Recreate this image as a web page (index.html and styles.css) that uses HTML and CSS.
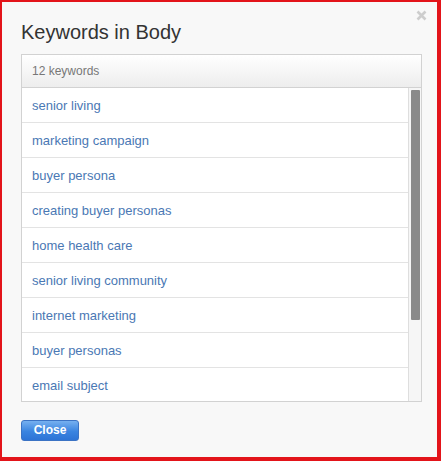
FILE: index.html
```html
<!DOCTYPE html>
<html>
<head>
<meta charset="utf-8">
<link rel="stylesheet" href="styles.css">
</head>
<body>
<div class="dialog">
  <svg class="close-x" width="11" height="11" viewBox="0 0 11 11"><path d="M1.5 1.5 L9.5 9.5 M9.5 1.5 L1.5 9.5" stroke="#cdcdcd" stroke-width="2.6" stroke-linecap="butt"/></svg>
  <h2 class="title">Keywords in Body</h2>
  <div class="box">
    <div class="box-head">12 keywords</div>
    <div class="list-wrap">
      <ul class="list">
        <li><a>senior living</a></li>
        <li><a>marketing campaign</a></li>
        <li><a>buyer persona</a></li>
        <li><a>creating buyer personas</a></li>
        <li><a>home health care</a></li>
        <li><a>senior living community</a></li>
        <li><a>internet marketing</a></li>
        <li><a>buyer personas</a></li>
        <li><a>email subject</a></li>
      </ul>
      <div class="scrollbar"><div class="thumb"></div></div>
    </div>
  </div>
  <div class="actions">
    <button class="btn">Close</button>
  </div>
</div>
</body>
</html>
```

FILE: styles.css
```css
html, body {
  margin: 0;
  padding: 0;
}
body {
  font-family: "Liberation Sans", Arial, sans-serif;
}
.dialog {
  position: relative;
  box-sizing: border-box;
  width: 441px;
  height: 461px;
  border-style: solid;
  border-color: #e3141a;
  border-width: 2px 4px 4px 2px;
  background: #f8f8f8;
  padding: 18px 15px 0 19px;
}
.close-x {
  position: absolute;
  top: 8px;
  right: 10px;
}
.title {
  margin: 0 0 10px 0;
  font-size: 20px;
  line-height: 24px;
  font-weight: normal;
  color: #333333;
}
.box {
  border: 1px solid #d2d2d2;
  background: #ffffff;
}
.box-head {
  height: 32px;
  line-height: 33px;
  padding-left: 10px;
  font-size: 12px;
  color: #777777;
  background: linear-gradient(#ffffff, #ededed);
  border-bottom: 1px solid #d2d2d2;
}
.list-wrap {
  display: flex;
  height: 313px;
}
.list {
  flex: 1;
  list-style: none;
  margin: 0;
  padding: 0;
  overflow: hidden;
}
.list li {
  height: 34px;
  line-height: 35px;
  border-bottom: 1px solid #e3e3e3;
  padding-left: 10px;
  font-size: 13px;
}
.list a {
  color: #4a78b4;
}
.scrollbar {
  width: 12px;
  background: #f6f6f6;
  border-left: 1px solid #dedede;
}
.thumb {
  height: 230px;
  margin: 2px 1px 0 2px;
  background: #8a8a8a;
  border-radius: 1px;
}
.actions {
  margin-top: 18px;
}
.btn {
  width: 58px;
  height: 21px;
  padding: 0;
  border: 1px solid #3b73c4;
  border-radius: 3px;
  background: linear-gradient(#76b0f0, #3a84e0 55%, #2d74d6);
  color: #ffffff;
  font-family: "Liberation Sans", Arial, sans-serif;
  font-size: 12px;
  font-weight: bold;
  line-height: 19px;
}
```
